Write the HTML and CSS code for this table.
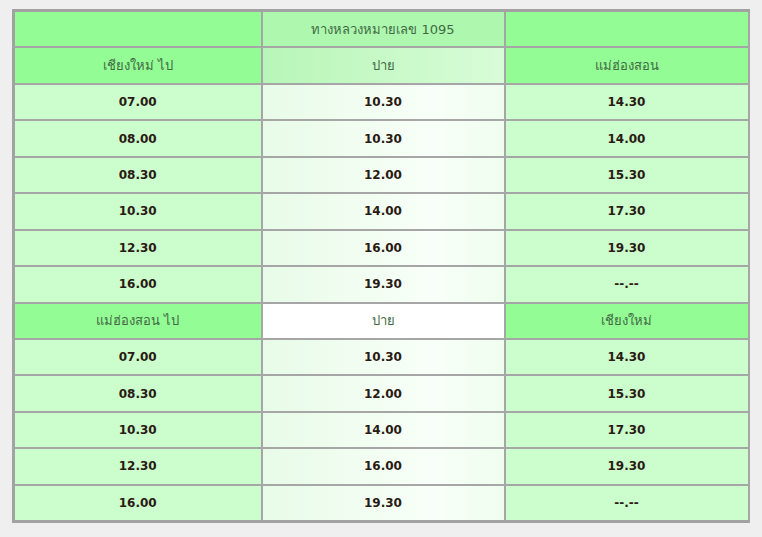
FILE: index.html
```html
<!DOCTYPE html>
<html lang="th">
<head>
<meta charset="utf-8">
<link rel="stylesheet" href="styles.css">
</head>
<body>
<table class="timetable">
  <colgroup><col class="c1"><col class="c2"><col class="c3"></colgroup>
  <tr><td class="head"></td><td class="head-mid">ทางหลวงหมายเลข 1095</td><td class="head"></td></tr>
  <tr><td class="head">เชียงใหม่ ไป</td><td class="sub-mid">ปาย</td><td class="head">แม่ฮ่องสอน</td></tr>
  <tr><td class="t">07.00</td><td class="t mid">10.30</td><td class="t">14.30</td></tr>
  <tr><td class="t">08.00</td><td class="t mid">10.30</td><td class="t">14.00</td></tr>
  <tr><td class="t">08.30</td><td class="t mid">12.00</td><td class="t">15.30</td></tr>
  <tr><td class="t">10.30</td><td class="t mid">14.00</td><td class="t">17.30</td></tr>
  <tr><td class="t">12.30</td><td class="t mid">16.00</td><td class="t">19.30</td></tr>
  <tr><td class="t">16.00</td><td class="t mid">19.30</td><td class="t">--.--</td></tr>
  <tr><td class="head">แม่ฮ่องสอน ไป</td><td class="white-mid">ปาย</td><td class="head">เชียงใหม่</td></tr>
  <tr><td class="t">07.00</td><td class="t mid">10.30</td><td class="t">14.30</td></tr>
  <tr><td class="t">08.30</td><td class="t mid">12.00</td><td class="t">15.30</td></tr>
  <tr><td class="t">10.30</td><td class="t mid">14.00</td><td class="t">17.30</td></tr>
  <tr><td class="t">12.30</td><td class="t mid">16.00</td><td class="t">19.30</td></tr>
  <tr><td class="t">16.00</td><td class="t mid">19.30</td><td class="t">--.--</td></tr>
</table>
</body>
</html>
```
FILE: styles.css
```css
html, body {
  margin: 0;
  background: #efefef;
}
body {
  padding: 9px 0 0 12px;
}
.timetable {
  border-collapse: collapse;
  width: 735px;
  table-layout: fixed;
  border: 3px solid #a2a2a2;
  border-right-width: 2px;
}
.c1 { width: 248px; }
.c2 { width: 243px; }
.c3 { width: 244px; }
.timetable td {
  border: 2px solid #a6a6a6;
  height: 34.45px;
  padding: 0;
  text-align: center;
  vertical-align: middle;
}
.head, .head-mid, .sub-mid, .white-mid {
  font-family: "DejaVu Sans", "Noto Sans", sans-serif;
  font-size: 13px;
  color: #3f6a44;
}
.head { background: #94fc94; }
.head-mid { background: #aef7ae; }
.sub-mid { background: linear-gradient(to right, #b8f6b8, #d8fcd8); }
.white-mid { background: #ffffff; }
.t {
  font-family: "DejaVu Sans", Verdana, sans-serif;
  font-weight: bold;
  font-size: 12px;
  color: #2a1a14;
  background: #ccfdcc;
}
.t.mid {
  background: linear-gradient(to right, #e8fbe8, #f8fff8 70%, #effdef);
}
```
